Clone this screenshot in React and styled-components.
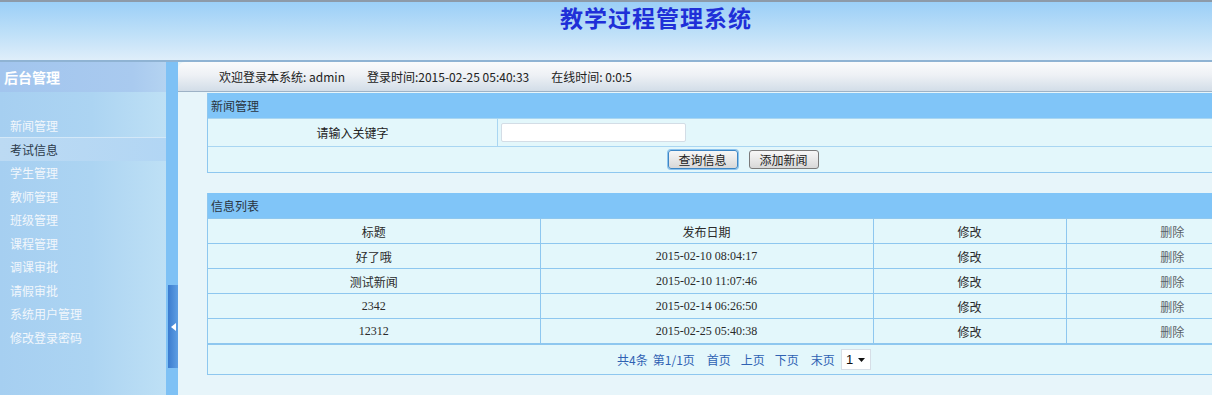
import React from 'react';
import styled, { createGlobalStyle } from 'styled-components';

const GlobalStyle = createGlobalStyle`
  body {
    margin: 0;
    overflow: hidden;
    font-family: "Noto Sans CJK SC", "Liberation Sans", sans-serif;
    font-size: 12px;
    color: #333;
  }
`;

const Page = styled.div`
  display: flex;
  flex-direction: column;
  width: 1212px;
  height: 395px;
  overflow: hidden;
`;

const Header = styled.div`
  height: 58px;
  border-top: 2px solid #8d9aa8;
  background: linear-gradient(to bottom, #9bcff7 0%, #bfe0f8 55%, #dfeefa 100%);
  border-bottom: 2px solid #8fb3d3;
  display: flex;
  justify-content: center;
`;

const Title = styled.h1`
  margin: 0;
  padding-left: 100px;
  font-family: "Noto Sans CJK SC", sans-serif;
  font-size: 23px;
  line-height: 30px;
  font-weight: 700;
  letter-spacing: 1px;
  color: #1f2fd8;
`;

const Body = styled.div`
  flex: 1;
  display: flex;
  min-height: 0;
`;

const Sidebar = styled.div`
  width: 166px;
  flex-shrink: 0;
  display: flex;
  flex-direction: column;
  background: linear-gradient(to right, #a6cff1 0%, #acd4f2 55%, #bee0f5 100%);
`;

const SideHead = styled.div`
  height: 30px;
  line-height: 30px;
  padding-left: 4px;
  background: linear-gradient(to right, #a2c5ee 0%, #a9caef 80%, #b4d3f1 100%);
  color: #fff;
  font-size: 14px;
  font-weight: 700;
`;

const Menu = styled.ul`
  list-style: none;
  margin: 0;
  padding: 22px 0 0;
`;

const MenuItem = styled.li`
  height: 23.5px;
  line-height: 23.5px;
  padding-left: 10px;
  font-size: 12px;
  color: ${(p) => (p.$active ? '#2b3a4a' : '#f2f7fc')};
  background: ${(p) => (p.$active ? 'linear-gradient(to right, #bcdaf3, #b2d6f4)' : 'transparent')};
  border-top: 1px solid ${(p) => (p.$active ? '#d3e8f8' : 'transparent')};
  margin-top: -1px;
`;

const Splitter = styled.div`
  width: 12px;
  flex-shrink: 0;
  background: #7ec1f5;
  display: flex;
  flex-direction: column;
  padding-top: 223px;
  padding-left: 2px;
  box-sizing: border-box;
`;

const Handle = styled.div`
  width: 10px;
  height: 83px;
  background: linear-gradient(to right, #3a7ccf, #5d9ee3);
  display: flex;
  align-items: center;
  justify-content: center;
`;

const Main = styled.div`
  flex: 1;
  display: flex;
  flex-direction: column;
  background: #e7f5fa;
  min-width: 0;
`;

const TopBar = styled.div`
  height: 29px;
  border-top-left-radius: 7px;
  border-bottom: 1px solid #9db2c6;
  background: linear-gradient(to bottom, #fafbfc 0%, #eef1f5 45%, #d2dde8 100%);
  display: flex;
  align-items: center;
  padding-left: 41px;
  gap: 22px;
  color: #222;
  font-size: 12px;
`;

const Content = styled.div`
  padding: 1px 0 0 29px;
  display: flex;
  flex-direction: column;
  gap: 20px;
`;

const Panel = styled.div`
  width: 1070px;
  flex-shrink: 0;
  border: 1px solid #8ec7ef;
  border-top: none;
  background: #e3f7fb;
`;

const PanelHead = styled.div`
  height: 25px;
  line-height: 25px;
  padding-left: 3px;
  background: #80c5f8;
  color: #2a3440;
  font-size: 12px;
`;

const FormRow = styled.div`
  display: flex;
  height: ${(p) => p.$h}px;
  border-top: 1px solid #a9d6f2;
  align-items: center;
  justify-content: ${(p) => (p.$center ? 'center' : 'flex-start')};
  gap: 11px;
`;

const Label = styled.div`
  width: 289px;
  height: 100%;
  display: flex;
  align-items: center;
  justify-content: center;
  border-right: 1px solid #a9d6f2;
  font-size: 12px;
  color: #222;
`;

const Input = styled.input`
  margin-left: -8px;
  width: 179px;
  height: 15px;
  border: 1px solid #d3dde6;
  border-radius: 2px;
  background: #fff;
`;

const Button = styled.button`
  width: 70px;
  height: 19px;
  padding: 0;
  font-family: "Noto Sans CJK SC", sans-serif;
  font-size: 12px;
  line-height: 15px;
  color: #222;
  border-radius: 3px;
  border: 1px solid ${(p) => (p.$focus ? '#3e86c4' : '#7a7a7a')};
  box-shadow: ${(p) => (p.$focus ? '0 0 0 1px #8cc4ef' : 'none')};
  background: linear-gradient(to bottom, #f7f7f7 0%, #e8e8e8 50%, #d8d8d8 100%);
`;

const Table = styled.table`
  width: 100%;
  border-collapse: collapse;
  table-layout: fixed;
`;

const Cell = styled.td`
  height: 24px;
  padding: 0;
  border: 1px solid #8ec7ef;
  text-align: center;
  font-family: ${(p) => (p.$serif ? '"Liberation Serif", "Noto Sans CJK SC", serif' : '"Noto Sans CJK SC", sans-serif')};
  font-size: 12px;
  color: ${(p) => (p.$blur ? '#5a5f66' : '#2a2a2a')};
  &:first-child { border-left: none; }
  &:last-child { border-right: none; }
`;

const Pager = styled.div`
  height: 29px;
  border-top: 1px solid #8ec7ef;
  display: flex;
  align-items: center;
  justify-content: center;
  color: #2f62b3;
  font-size: 12px;
  padding-left: 2px;
`;

const PagerLink = styled.span`
  margin-right: ${(p) => p.$gap}px;
`;

const Select = styled.div`
  width: 30px;
  height: 21px;
  background: #fff;
  border: 1px solid #d6dee6;
  display: flex;
  align-items: center;
  gap: 5px;
  padding-left: 4px;
  box-sizing: border-box;
  color: #111;
  font-family: "Liberation Sans", sans-serif;
  font-size: 13px;
`;

const menu = ['新闻管理', '考试信息', '学生管理', '教师管理', '班级管理', '课程管理', '调课审批', '请假审批', '系统用户管理', '修改登录密码'];

const rows = [
  { title: '好了哦', date: '2015-02-10 08:04:17' },
  { title: '测试新闻', date: '2015-02-10 11:07:46' },
  { title: '2342', date: '2015-02-14 06:26:50' },
  { title: '12312', date: '2015-02-25 05:40:38' },
];

const isNum = (s) => /^\d+$/.test(s);

export default function App() {
  return (
    <Page>
      <GlobalStyle />
      <Header>
        <Title>教学过程管理系统</Title>
      </Header>
      <Body>
        <Sidebar>
          <SideHead>后台管理</SideHead>
          <Menu>
            {menu.map((m) => (
              <MenuItem key={m} $active={m === '考试信息'}>{m}</MenuItem>
            ))}
          </Menu>
        </Sidebar>
        <Splitter>
          <Handle>
            <svg width="5" height="8" viewBox="0 0 5 8">
              <path d="M5 0 L0 4 L5 8 Z" fill="#fff" />
            </svg>
          </Handle>
        </Splitter>
        <Main>
          <TopBar>
            <span>欢迎登录本系统: admin</span>
            <span>登录时间:2015-02-25 05:40:33</span>
            <span>在线时间: 0:0:5</span>
          </TopBar>
          <Content>
            <Panel>
              <PanelHead>新闻管理</PanelHead>
              <FormRow $h={27}>
                <Label>请输入关键字</Label>
                <Input />
              </FormRow>
              <FormRow $h={25} $center>
                <Button $focus>查询信息</Button>
                <Button>添加新闻</Button>
              </FormRow>
            </Panel>
            <Panel>
              <PanelHead>信息列表</PanelHead>
              <Table>
                <colgroup>
                  <col style={{ width: 332 }} />
                  <col style={{ width: 333 }} />
                  <col style={{ width: 193 }} />
                  <col />
                </colgroup>
                <tbody>
                  <tr>
                    <Cell>标题</Cell>
                    <Cell>发布日期</Cell>
                    <Cell>修改</Cell>
                    <Cell $blur>删除</Cell>
                  </tr>
                  {rows.map((r) => (
                    <tr key={r.date}>
                      <Cell $serif={isNum(r.title)}>{r.title}</Cell>
                      <Cell $serif>{r.date}</Cell>
                      <Cell>修改</Cell>
                      <Cell $blur>删除</Cell>
                    </tr>
                  ))}
                </tbody>
              </Table>
              <Pager>
                <PagerLink $gap={5}>共4条</PagerLink>
                <PagerLink $gap={12}>第1/1页</PagerLink>
                <PagerLink $gap={10}>首页</PagerLink>
                <PagerLink $gap={10}>上页</PagerLink>
                <PagerLink $gap={12}>下页</PagerLink>
                <PagerLink $gap={6}>末页</PagerLink>
                <Select>
                  1
                  <svg width="7" height="4" viewBox="0 0 7 4">
                    <path d="M0 0 L7 0 L3.5 4 Z" fill="#111" />
                  </svg>
                </Select>
              </Pager>
            </Panel>
          </Content>
        </Main>
      </Body>
    </Page>
  );
}
